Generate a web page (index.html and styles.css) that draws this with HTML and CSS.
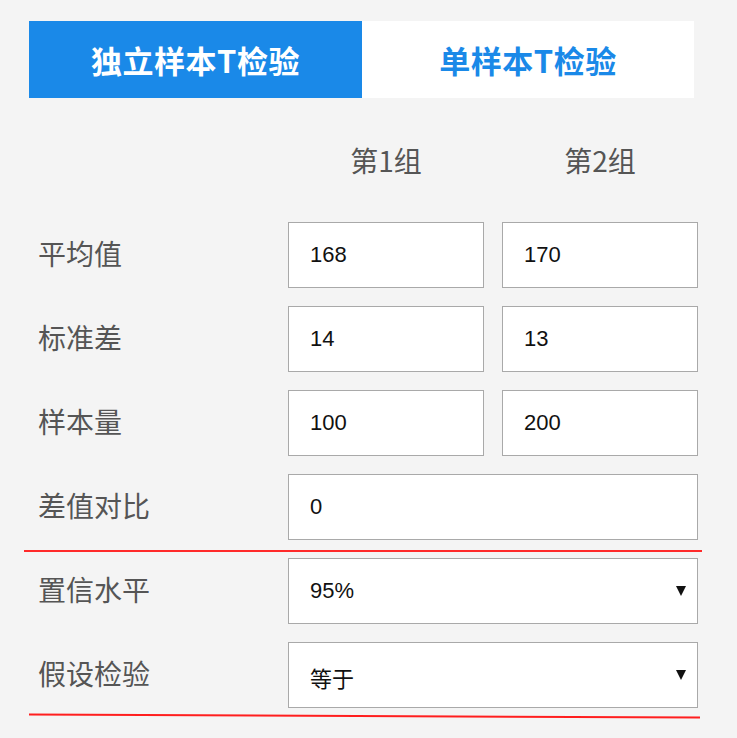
FILE: index.html
```html
<!DOCTYPE html>
<html lang="zh-CN">
<head>
<meta charset="utf-8">
<title>T检验</title>
<link rel="stylesheet" href="styles.css">
</head>
<body>
<div class="page">
  <div class="tabs">
    <div class="tab tab-active">独立样本T检验</div>
    <div class="tab">单样本T检验</div>
  </div>

  <div class="grid head">
    <div></div>
    <div class="col-title">第1组</div>
    <div class="col-title">第2组</div>
  </div>

  <div class="grid rows">
    <div class="label">平均值</div>
    <div class="field">168</div>
    <div class="field">170</div>

    <div class="label">标准差</div>
    <div class="field">14</div>
    <div class="field">13</div>

    <div class="label">样本量</div>
    <div class="field">100</div>
    <div class="field">200</div>

    <div class="label">差值对比</div>
    <div class="field wide">0</div>
  </div>

  <div class="divider"></div>

  <div class="grid rows">
    <div class="label">置信水平</div>
    <div class="field wide select"><span>95%</span><span class="caret"></span></div>

    <div class="label">假设检验</div>
    <div class="field wide select"><span class="cjk">等于</span><span class="caret"></span></div>
  </div>

  <svg class="divider-slant" width="673" height="6" viewBox="0 0 673 6">
    <line x1="0" y1="1.5" x2="671" y2="4.5" stroke="#ff1e1e" stroke-width="2"/>
  </svg>
</div>
</body>
</html>
```

FILE: styles.css
```css
html, body {
  margin: 0;
  padding: 0;
  background: #f4f4f4;
}

body {
  font-family: "Noto Sans CJK SC", "Liberation Sans", sans-serif;
  color: #555;
}

.page {
  padding: 21px 0 0 29px;
  width: 680px;
}

.tabs {
  display: flex;
  width: 665px;
  height: 77px;
  background: #fff;
}

.tab {
  flex: 0 0 332px;
  display: flex;
  align-items: center;
  justify-content: center;
  font-size: 31px;
  font-weight: 700;
  color: #1a89e8;
  letter-spacing: 0.5px;
}

.tab-active {
  flex-basis: 333px;
  background: #1a89e8;
  color: #fff;
}

.grid {
  display: grid;
  grid-template-columns: 232px 196px 196px;
  column-gap: 18px;
  row-gap: 18px;
  margin-left: 9px;
}

.head {
  margin-top: 40px;
  height: 44px;
  margin-bottom: 40px;
  align-items: center;
}

.col-title {
  text-align: center;
  font-size: 28px;
  line-height: 44px;
  color: #555;
}

.label {
  box-sizing: border-box;
  display: flex;
  align-items: center;
  height: 66px;
  padding-bottom: 5px;
  font-size: 28px;
  color: #555;
}

.field {
  box-sizing: border-box;
  height: 66px;
  border: 1px solid #a9a9a9;
  background: #fff;
  display: flex;
  align-items: center;
  padding-left: 21px;
  font-family: "Liberation Sans", "Noto Sans CJK SC", sans-serif;
  font-size: 22px;
  color: #111;
}

.wide {
  grid-column: 2 / 4;
}

.select {
  justify-content: space-between;
  padding-right: 11px;
}

.cjk {
  font-family: "Noto Sans CJK SC", sans-serif;
  padding-top: 3px;
}

.caret {
  width: 0;
  height: 0;
  border-left: 5px solid transparent;
  border-right: 5px solid transparent;
  border-top: 10px solid #111;
}

.divider {
  height: 2px;
  background: #ff2a2a;
  width: 678px;
  margin: 10px 0 6px -5px;
}

.divider-slant {
  display: block;
  margin-top: 5px;
}
```
